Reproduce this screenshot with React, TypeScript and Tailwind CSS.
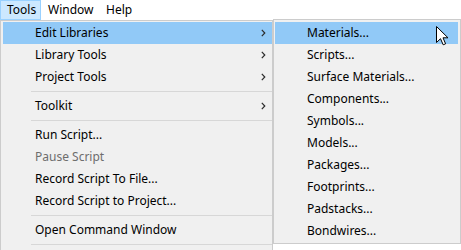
type Item =
  | { kind: 'item'; label: string; sub?: boolean; disabled?: boolean; active?: boolean }
  | { kind: 'sep' }
  | { kind: 'blank' };

const mainItems: Item[] = [
  { kind: 'item', label: 'Edit Libraries', sub: true, active: true },
  { kind: 'item', label: 'Library Tools', sub: true },
  { kind: 'item', label: 'Project Tools', sub: true },
  { kind: 'sep' },
  { kind: 'item', label: 'Toolkit', sub: true },
  { kind: 'sep' },
  { kind: 'item', label: 'Run Script...' },
  { kind: 'item', label: 'Pause Script', disabled: true },
  { kind: 'item', label: 'Record Script To File...' },
  { kind: 'item', label: 'Record Script to Project...' },
  { kind: 'sep' },
  { kind: 'item', label: 'Open Command Window' },
  { kind: 'sep' },
  { kind: 'blank' },
];

const libItems = [
  'Materials...',
  'Scripts...',
  'Surface Materials...',
  'Components...',
  'Symbols...',
  'Models...',
  'Packages...',
  'Footprints...',
  'Padstacks...',
  'Bondwires...',
];

const Cursor = () => (
  <svg width="13" height="20" viewBox="0 0 13 20" className="absolute left-[436px] top-[26px]">
    <path
      d="M0.5 0.5 L0.5 16.5 L4.5 12.7 L7.2 18.8 L9.6 17.8 L7 11.8 L12 11.8 Z"
      fill="#fff"
      stroke="#000"
      strokeWidth="1"
    />
  </svg>
);

const Chevron = () => (
  <svg width="5" height="8" viewBox="0 0 5 8" className="shrink-0">
    <polyline points="0.8,0.8 3.8,4 0.8,7.2" fill="none" stroke="#2b2b2b" strokeWidth="1.2" />
  </svg>
);

const MenuRow = ({ item }: { item: Item }) => {
  if (item.kind === 'sep') {
    return (
      <div className="h-[7px] flex items-center pl-[28px]">
        <div className="h-px w-full bg-[#d7d7d7]" />
      </div>
    );
  }
  if (item.kind === 'blank') return <div className="h-[22px]" />;
  return (
    <div
      className={`h-[22px] flex items-center pl-[32px] pr-[6px] ${item.active ? 'bg-[#91c9f7]' : ''} ${
        item.disabled ? 'text-[#6d6d6d]' : 'text-black'
      }`}
    >
      <span className="flex-1">{item.label}</span>
      {item.sub && <Chevron />}
    </div>
  );
};

export default function App() {
  return (
    <div
      className="relative h-[250px] w-[461px] overflow-hidden bg-white text-[12px] leading-none"
      style={{ fontFamily: '"Noto Sans", "Open Sans", sans-serif' }}
    >
      {/* Menu bar */}
      <div className="flex h-[20px] items-stretch">
        <div className="flex items-center w-[41px] pl-[6px] bg-[#cce8ff] border border-[#99d1ff] h-[20px]">Tools</div>
        <div className="flex items-center w-[58px] pl-[7px]">Window</div>
        <div className="flex items-center pl-[7px]">Help</div>
      </div>

      {/* Tools dropdown */}
      <div className="absolute left-0 top-[20px] w-[273px] bg-[#f0f0f0] border border-[#cccccc] pl-[2px] pt-px pb-[2px]">
        {mainItems.map((it, i) => (
          <MenuRow key={i} item={it} />
        ))}
      </div>

      {/* Edit Libraries submenu */}
      <div className="absolute left-[273px] top-[19px] w-[188px] bg-[#f0f0f0] border border-[#cccccc] pl-px pr-[2px] pt-[2px] pb-px">
        {libItems.map((label, i) => (
          <div
            key={label}
            className={`h-[22px] flex items-center pl-[32px] text-black ${i === 0 ? 'bg-[#91c9f7]' : ''}`}
          >
            {label}
          </div>
        ))}
      </div>

      <Cursor />
    </div>
  );
}
